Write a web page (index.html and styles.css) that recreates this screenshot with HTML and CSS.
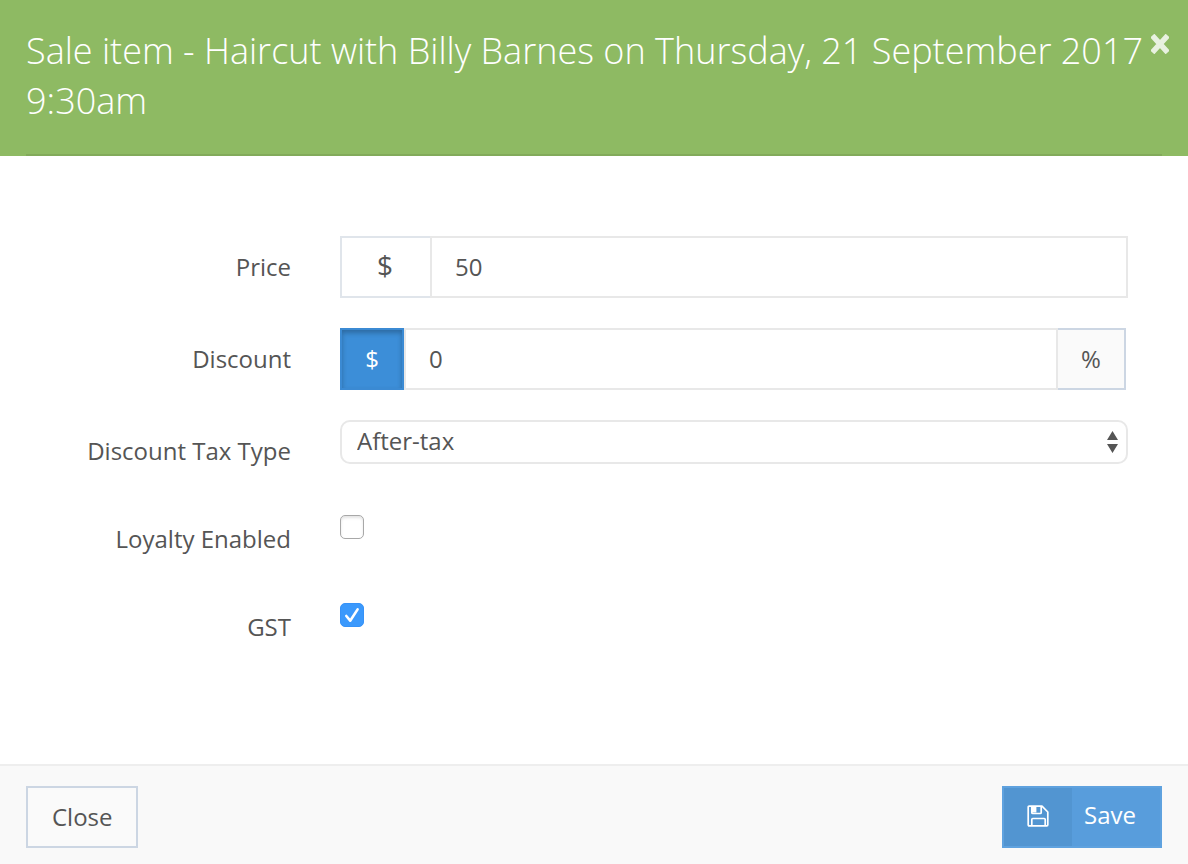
FILE: index.html
```html
<!DOCTYPE html>
<html lang="en">
<head>
<meta charset="utf-8">
<meta name="viewport" content="width=device-width, initial-scale=1">
<title>Sale item</title>
<link rel="stylesheet" href="styles.css">
</head>
<body>
<form class="modal">
  <header class="modal-header">
    <h1 class="modal-title">Sale item - Haircut with Billy Barnes on Thursday, 21 September 2017 9:30am</h1>
    <button class="dismiss" type="button" aria-label="Dismiss">
      <svg viewBox="0 0 18 20" width="18" height="20" aria-hidden="true"><path d="M3.2 3.7 14.8 16.3M14.8 3.7 3.2 16.3" stroke="currentColor" stroke-width="5.6" stroke-linecap="square"/></svg>
    </button>
  </header>

  <main class="modal-body">
    <div class="row">
      <label class="label" for="price">Price</label>
      <div class="group">
        <span class="addon">$</span>
        <input class="input" id="price" type="text" value="50">
      </div>
    </div>
    <div class="row">
      <label class="label" for="discount">Discount</label>
      <div class="group group-discount">
        <button class="unit unit-active" type="button">$</button>
        <input class="input" id="discount" type="text" value="0">
        <button class="unit unit-percent" type="button">%</button>
      </div>
    </div>
    <div class="row">
      <label class="label" for="tax">Discount Tax Type</label>
      <div class="select-wrap">
        <select class="select" id="tax"><option>After-tax</option></select>
        <svg class="arrows" viewBox="0 0 12 22" width="12" height="22" aria-hidden="true"><path d="M6.5 0 12 9H1zM6.5 22 1 13h11z" fill="#555"/></svg>
      </div>
    </div>
    <div class="row">
      <label class="label" for="loyalty">Loyalty Enabled</label>
      <div class="check"><input class="checkbox" id="loyalty" type="checkbox"></div>
    </div>
    <div class="row">
      <label class="label" for="gst">GST</label>
      <div class="check">
        <input class="checkbox" id="gst" type="checkbox" checked>
        <svg class="tick" viewBox="0 0 24 24" width="24" height="24" aria-hidden="true"><path d="m6.3 13 3.9 4.7L17.6 6.4" fill="none" stroke="#fff" stroke-width="2.6" stroke-linecap="round" stroke-linejoin="round"/></svg>
      </div>
    </div>
  </main>

  <footer class="modal-footer">
    <button class="btn btn-close" type="button">Close</button>
    <button class="btn btn-save" type="submit">
      <span class="btn-icon">
        <svg viewBox="0 0 22 22" width="22" height="22" aria-hidden="true"><g fill="none" stroke="#fff" stroke-width="1.7" stroke-linejoin="round"><path d="M1.2 2.2q0-1 1-1H15L20.8 7v12.8q0 1-1 1H2.2q-1 0-1-1z"/><path d="M4.8 1.2v6.3q0 1 1 1h7.4q1 0 1-1V1.2M4.8 20.8v-6.3q0-1 1-1h11.4q1 0 1 1v6.3"/></g><path d="M4.8 1.2h4.6v6.3H4.8z" fill="#fff"/></svg>
      </span>
      <span class="btn-text">Save</span>
    </button>
  </footer>
</form>
</body>
</html>
```
FILE: styles.css
```css
*,
*::before,
*::after {
  box-sizing: border-box;
}

body {
  margin: 0;
  background: #fff;
  color: #555;
  font-family: "Open Sans", "Noto Sans", sans-serif;
  font-size: 24px;
  line-height: 30px;
}

button,
input,
select {
  margin: 0;
  color: inherit;
  font: inherit;
}

.modal {
  display: flex;
  flex-direction: column;
  min-height: 100vh;
}

.modal-header {
  position: relative;
  padding: 0 26px;
  background: #8eba63;
}

.modal-title {
  margin: 0;
  padding: 26px 0 28px;
  border-bottom: 2px solid #82aa5a;
  color: #fff;
  font-size: 36px;
  font-weight: 300;
  line-height: 50px;
}

.dismiss {
  position: absolute;
  top: 34px;
  right: 19px;
  display: flex;
  padding: 0;
  border: 0;
  background: none;
  color: #e8f1e0;
}

.modal-body {
  display: flex;
  flex: 1;
  flex-direction: column;
  gap: 30px;
  padding: 80px 60px;
}

.row {
  display: grid;
  grid-template-columns: 231px minmax(0, 1fr);
  column-gap: 49px;
  align-items: start;
}

.label {
  padding: 16px 0 12px;
  text-align: right;
}

.group {
  display: flex;
  height: 62px;
}

.group-discount {
  padding-right: 2px;
}

.addon {
  display: flex;
  align-items: center;
  justify-content: center;
  width: 90px;
  padding: 0 2px 4px 0;
  border: 2px solid #e0e5eb;
  border-right: 0;
  font-size: 28px;
}

.input {
  flex: 1;
  min-width: 0;
  padding: 0 23px;
  border: 2px solid #e8e8e8;
  border-radius: 0;
  background: #fff;
}

.unit {
  padding: 0;
}

.unit-active {
  width: 64px;
  border: 2px solid #3b8ad3;
  background: #3c8ed8;
  box-shadow: inset 0 3px 5px rgba(0, 0, 0, 0.25);
  color: #fff;
}

.unit-percent {
  width: 68px;
  border: 2px solid #ccd6e3;
  border-left: 0;
  background: #fafafa;
}

.select-wrap {
  position: relative;
}

.select {
  display: block;
  width: 100%;
  height: 44px;
  padding: 0 36px 2px 15px;
  border: 2px solid #e8e8e8;
  border-radius: 10px;
  appearance: none;
  background: #fff;
}

.arrows {
  position: absolute;
  top: 11px;
  right: 10px;
  pointer-events: none;
}

.check {
  position: relative;
  padding-top: 7px;
}

.checkbox {
  display: block;
  width: 24px;
  height: 24px;
  border: 1px solid #a8a8a8;
  border-radius: 5px;
  appearance: none;
  background: #fff;
  box-shadow: inset 0 2px 3px #e4e4e4;
}

.checkbox:checked {
  border-color: #3692f8;
  background: #3b99fc;
  box-shadow: none;
}

.tick {
  position: absolute;
  top: 7px;
  left: 0;
  pointer-events: none;
}

.modal-footer {
  display: flex;
  justify-content: space-between;
  padding: 20px 26px 16px;
  border-top: 2px solid #eee;
  background: #f9f9f9;
}

.btn {
  height: 62px;
  border: 2px solid #ccd6e3;
  border-radius: 0;
}

.btn-close {
  padding: 0 23px 0 24px;
  background: #fafafa;
}

.btn-save {
  display: flex;
  padding: 0;
  border-color: #5fa2df;
  background: #589ddc;
  color: #fff;
}

.btn-icon {
  display: flex;
  align-items: center;
  justify-content: center;
  width: 68px;
  height: 100%;
  padding-bottom: 3px;
  background: #5295d1;
}

.btn-text {
  align-self: center;
  padding: 0 24px 4px 12px;
}
```
